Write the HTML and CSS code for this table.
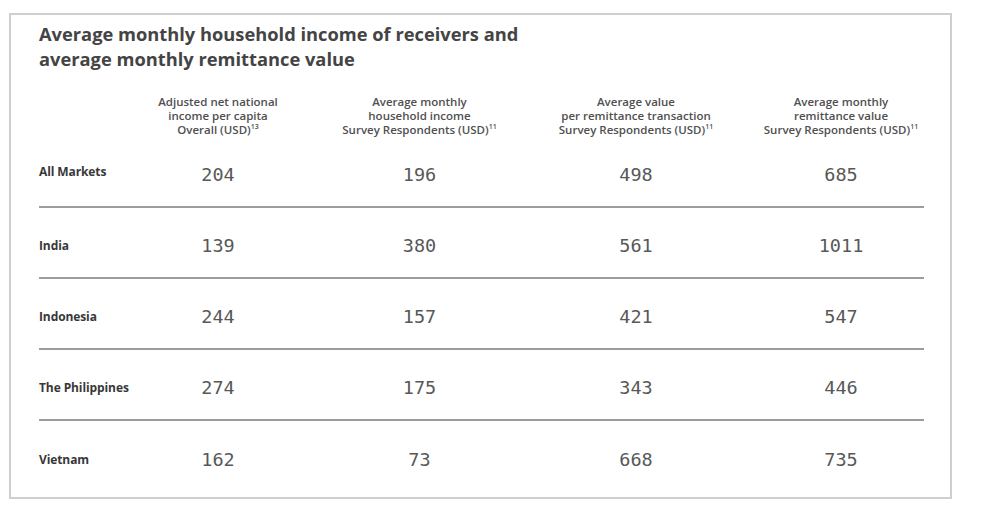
FILE: index.html
```html
<!DOCTYPE html>
<html lang="en">
<head>
<meta charset="utf-8">
<title>Average monthly household income</title>
<link rel="stylesheet" href="styles.css">
</head>
<body>
<div class="frame">
  <h1 class="title">Average monthly household income of receivers and<br>average monthly remittance value</h1>
  <div class="table">
    <div class="row head">
      <div class="cell label"></div>
      <div class="cell">Adjusted net national<br>income per capita<br>Overall (USD)<sup>13</sup></div>
      <div class="cell">Average monthly<br>household income<br>Survey Respondents (USD)<sup>11</sup></div>
      <div class="cell">Average value<br>per remittance transaction<br>Survey Respondents (USD)<sup>11</sup></div>
      <div class="cell last">Average monthly<br>remittance value<br>Survey Respondents (USD)<sup>11</sup></div>
    </div>
    <div class="row data">
      <div class="cell label up">All Markets</div>
      <div class="cell num">204</div>
      <div class="cell num">196</div>
      <div class="cell num">498</div>
      <div class="cell num last">685</div>
    </div>
    <div class="row data">
      <div class="cell label">India</div>
      <div class="cell num">139</div>
      <div class="cell num">380</div>
      <div class="cell num">561</div>
      <div class="cell num last">1011</div>
    </div>
    <div class="row data">
      <div class="cell label">Indonesia</div>
      <div class="cell num">244</div>
      <div class="cell num">157</div>
      <div class="cell num">421</div>
      <div class="cell num last">547</div>
    </div>
    <div class="row data">
      <div class="cell label">The Philippines</div>
      <div class="cell num">274</div>
      <div class="cell num">175</div>
      <div class="cell num">343</div>
      <div class="cell num last">446</div>
    </div>
    <div class="row data final">
      <div class="cell label">Vietnam</div>
      <div class="cell num">162</div>
      <div class="cell num">73</div>
      <div class="cell num">668</div>
      <div class="cell num last">735</div>
    </div>
  </div>
</div>
</body>
</html>
```

FILE: styles.css
```css
* {
  box-sizing: border-box;
}

html, body {
  margin: 0;
  padding: 0;
  background: #ffffff;
}

body {
  font-family: "Open Sans", "Liberation Sans", sans-serif;
  color: #4a4a4a;
}

.frame {
  margin: 13px 0 0 9px;
  width: 943px;
  height: 486px;
  border: 2px solid #cfcfcf;
  padding: 6px 0 0 28px;
}

.title {
  margin: 0;
  font-size: 18.3px;
  line-height: 25px;
  font-weight: 700;
  color: #444444;
}

.table {
  width: 885px;
  margin-top: 24px;
}

.row {
  display: grid;
  grid-template-columns: 99px 160px 243px 190px 193px;
}

.head {
  height: 42px;
  font-size: 11.5px;
  line-height: 14px;
  font-weight: 600;
  color: #505050;
}

.head .cell {
  text-align: center;
}

.head sup {
  font-size: 7px;
  line-height: 0;
  vertical-align: 5px;
}

.data {
  height: 71px;
  padding-top: 6px;
  align-items: center;
  border-bottom: 2px solid #9c9c9c;
}

.data.final {
  border-bottom: none;
}

.cell.last {
  padding-left: 27px;
}

.label {
  font-size: 12px;
  line-height: 14px;
  font-weight: 700;
  color: #383838;
  white-space: nowrap;
  text-align: left;
  letter-spacing: -0.1px;
}

.label.up {
  padding-bottom: 6px;
}

.num {
  font-family: "DejaVu Sans Mono", "Liberation Mono", monospace;
  font-size: 18.5px;
  line-height: 22px;
  color: #585858;
  text-align: center;
}
```
